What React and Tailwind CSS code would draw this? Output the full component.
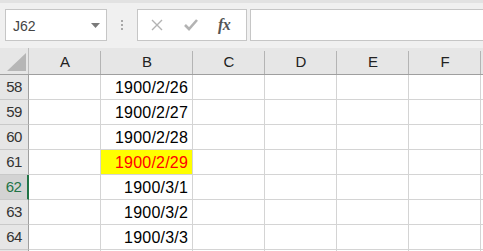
import React from 'react';

const columns = [
  { name: 'A', width: 'w-[72px]' },
  { name: 'B', width: 'w-[92px]' },
  { name: 'C', width: 'w-[72px]' },
  { name: 'D', width: 'w-[72px]' },
  { name: 'E', width: 'w-[72px]' },
  { name: 'F', width: 'w-[72px]' },
];

const rows = [
  { num: 58, value: '1900/2/26' },
  { num: 59, value: '1900/2/27' },
  { num: 60, value: '1900/2/28' },
  { num: 61, value: '1900/2/29', highlight: true },
  { num: 62, value: '1900/3/1', active: true },
  { num: 63, value: '1900/3/2' },
  { num: 64, value: '1900/3/3' },
  // only the top edge of the next row shows
  { num: '', value: '' },
];

const FormulaBar = () => (
  <div className="h-[48px] bg-[#f0f0f0] border-t-[3px] border-[#e2e2e2] flex items-start pt-[6px]">
    {/* Name box */}
    <div className="ml-[5px] w-[102px] h-[32px] bg-white border border-[#c6c6c6] flex items-center pl-[7px] pr-[6px]">
      <span className="text-[14px] text-[#444] flex-1 pt-[2px]">J62</span>
      <svg width="9" height="5" viewBox="0 0 9 5">
        <path d="M0 0 L9 0 L4.5 5 Z" fill="#7a7a7a" />
      </svg>
    </div>
    {/* Separator dots */}
    <div className="w-[30px] h-[32px] flex flex-col items-center justify-center gap-[2px]">
      <span className="w-[2px] h-[2px] bg-[#a8a8a8]" />
      <span className="w-[2px] h-[2px] bg-[#a8a8a8]" />
      <span className="w-[2px] h-[2px] bg-[#a8a8a8]" />
    </div>
    {/* Cancel / enter / fx */}
    <div className="w-[110px] h-[32px] bg-white border border-[#c6c6c6] flex items-center">
      <svg width="12" height="12" viewBox="0 0 12 12" className="ml-[13px]">
        <path d="M1 1 L11 11 M11 1 L1 11" stroke="#b3b3b3" strokeWidth="1.4" />
      </svg>
      <svg width="14" height="12" viewBox="0 0 14 12" className="ml-[21px]">
        <path d="M1 6 L5 10 L13 1" stroke="#b3b3b3" strokeWidth="2.6" fill="none" />
      </svg>
      <span className="ml-[20px] text-[16px] italic font-bold text-[#555] font-['Liberation_Serif',serif] tracking-[-0.5px]">fx</span>
    </div>
    {/* Formula input */}
    <div className="ml-[3px] flex-1 h-[32px] bg-white border border-r-0 border-[#c6c6c6]" />
  </div>
);

const HeaderRow = () => (
  <div className="flex h-[27px] bg-[#e6e6e6] border-b border-[#9f9f9f]">
    <div className="w-[29px] shrink-0 relative border-r border-[#bdbdbd]">
      <svg width="19" height="18" viewBox="0 0 19 18" className="absolute left-[7px] top-[5px]">
        <path d="M19 0 L19 18 L0 18 Z" fill="#b6b6b6" />
      </svg>
    </div>
    {columns.map((c) => (
      <div
        key={c.name}
        className={`${c.width} shrink-0 flex items-center justify-center text-[15px] text-[#222] pt-[3px] relative`}
      >
        {c.name}
        <span className="absolute right-0 top-[3px] bottom-0 w-px bg-[#b4b4b4]" />
      </div>
    ))}
    <div className="flex-1" />
  </div>
);

const DataRow = ({ row }) => (
  <div className="flex h-[25px]">
    <div
      className={`w-[29px] shrink-0 border-b border-[#c9c9c9] flex items-center justify-center text-[15px] tracking-[-0.5px] pt-[1px] ${
        row.active
          ? 'bg-[#d3d3d3] text-[#217346] border-r-2 border-r-[#217346]'
          : 'bg-[#e6e6e6] text-[#333] border-r border-r-[#9f9f9f]'
      }`}
    >
      {row.num}
    </div>
    {columns.map((c) => {
      const isB = c.name === 'B';
      return (
        <div
          key={c.name}
          className={`${c.width} shrink-0 border-r border-b border-[#d4d4d4] flex items-center justify-end pr-[4px] pt-[1px] text-[16px] tracking-[0.2px] ${
            isB && row.highlight ? 'bg-[#ffff00] text-[#ff0000]' : 'bg-white text-black'
          }`}
        >
          {isB ? row.value : ''}
        </div>
      );
    })}
    <div className="flex-1 bg-white border-b border-[#d4d4d4]" />
  </div>
);

const App = () => {
  return (
    <div className="w-[483px] h-[251px] overflow-hidden bg-white font-['Liberation_Sans',Arial,sans-serif]">
      <FormulaBar />
      <HeaderRow />
      {rows.map((r, i) => (
        <DataRow key={i} row={r} />
      ))}
    </div>
  );
};

export default App;
